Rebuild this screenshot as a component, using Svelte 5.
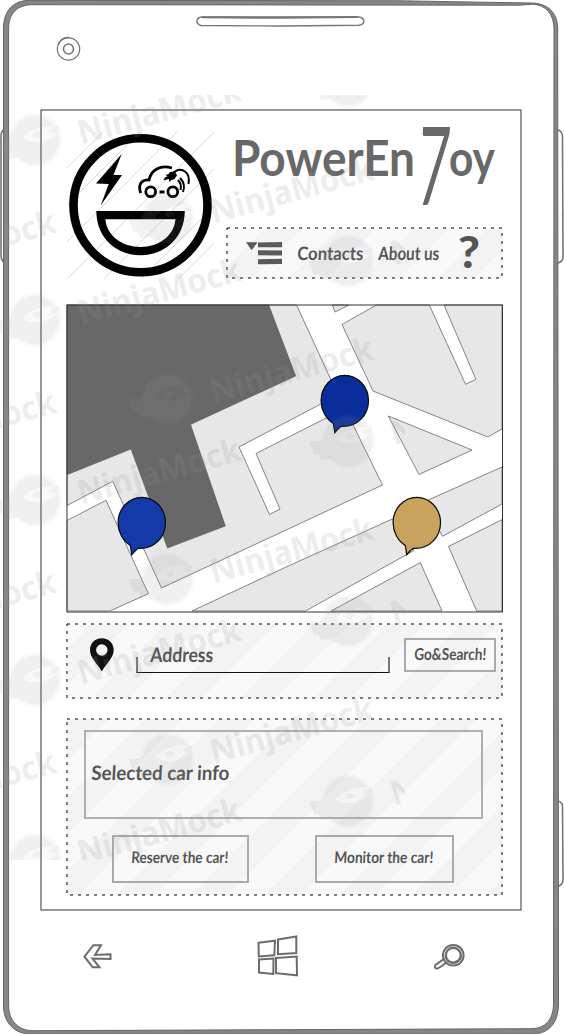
<script>
  const heads = [
    [35, 140], [35, 320], [35, 500], [35, 680], [35, 860],
    [167.5, 219], [167.5, 399], [167.5, 579], [167.5, 759],
    [348, 81], [348, 261], [348, 441], [348, 621], [348, 801]
  ];
  const marks = [...heads, [-150, 272], [-150, 452], [-150, 632], [-150, 812]];
  const blocks = [
    '67,305 296.5,305 338,395 239,447 269.5,514.5 280,509 256,453.5 326.3,418 345,408.5 382.5,485 285,530.5 161.5,588 112.7,481.3 67,505.5',
    '67,520.5 106,500.3 148.3,593.7 110,611 67,611',
    '192,611 285,567.5 399,516 414,550.5 305.5,611',
    '425,501.5 502,467 502,504 442.5,536.3',
    '331,611 420.3,562.7 442,611',
    '448.5,546.5 502,519.7 502,611 476.7,611',
    '388.3,416 472,450 419,474.5',
    '342,324.5 376.5,305 429.3,305 465.5,384.3 476,379.5 444,305 502,305 502,429 487.7,437 373,391',
    '332.3,305 335,312 349,305'
  ];
  const pins = [
    { x: 344.8, y: 400.7, fill: '#092d9b' },
    { x: 416.8, y: 522.7, fill: '#c9a25d' },
    { x: 141.8, y: 522.7, fill: '#143aa9' }
  ];
  const hatch = [36, 73, 110, 147, 184, 221, 258];
</script>

{#snippet hand(text, w, size)}
  <svg class="hand" width={w} height="24" aria-label={text}>
    <text x="0" y="18" font-size={size} textLength={w} lengthAdjust="spacingAndGlyphs">{text}</text>
  </svg>
{/snippet}

{#snippet dashes()}
  <svg class="dashes"><rect width="100%" height="100%" /></svg>
{/snippet}

<div class="phone">
  <svg class="frame" width="564" height="1034" viewBox="0 0 564 1034">
    <g fill="none" stroke="#777" stroke-width="1.6">
      <path d="M4 130Q1 131 1 136V256Q1 260 4 262" />
      <path d="M558 130Q562 131 562.500 136L563 258Q562 262 558 263" />
      <path d="M558 801Q562 802 562.500 806L563 881Q562 885 558 886.500" />
    </g>
    <path
      fill="#868686" stroke="#666" stroke-width="1" fill-rule="evenodd"
      d="M30 .3L400 .8 531 3C548 3 557.500 13 557.700 28L558.500 1005C558 1024 548 1034 532 1034H31C14 1034 3.500 1022 3.500 1006V27C4 10 14 .3 30 .3ZM31 4.700L520 5.200 533 4.200C546 5 553.500 14 554 28L553.500 1005C553 1020 545 1028.500 532 1028.700L31 1030.700C17 1030 8.600 1019 8.600 1006V27C9 13 18 5 31 4.700Z"
    />
    <g fill="none" stroke="#777" stroke-width="1.400">
      <path d="M201 17H359Q364 18 364 21.500Q363 25 359 25.200L280 26 201 25.500Q197 24 197 21.500Q197 18 201 17Z" />
      <path stroke-width="2" d="M202 17.300L280 17.800 358 17" />
      <circle cx="68.500" cy="49" r="11.200" stroke-width="1.200" />
      <circle cx="68.500" cy="49" r="5" stroke-width="1.600" />
      <path d="M58 45Q61 37 69 37.500" />
    </g>
  </svg>

  <main class="screen">
    <svg class="outline"><rect width="100%" height="100%" /></svg>
    <header>
      <svg class="logo" width="148" height="148" viewBox="67 132 148 148">
        <g stroke="#ccc" stroke-width=".7">
          {#each hatch as h}
            <line x1={67 + Math.max(0, h - 147)} y1={132 + Math.min(147, h)} x2={67 + Math.min(147, h)} y2={132 + Math.max(0, h - 147)} />
          {/each}
        </g>
        <circle cx="140.500" cy="205.300" r="67" fill="none" stroke="#000" stroke-width="8.600" />
        <path d="M121.700 154L96 183.500 108.700 184 100.700 205.500 122 175 113.500 175Z" />
        <path fill-rule="evenodd" d="M96.300 211H184.800C184.500 239 164 255.200 140.500 255.200S96.600 239 96.300 211ZM105.300 219.300C107 236 122 247 140.500 247S174 236 175.500 219.300Z" />
        <g fill="none" stroke="#000" stroke-width="2.800">
          <circle cx="150.700" cy="191.800" r="4.900" />
          <circle cx="172.800" cy="191.800" r="4.900" />
          <path d="M159.500 192H164.500M140.700 193C137.500 184 142 179.500 149 180C151 170 160 164.500 172 168" />
          <path d="M172 174Q179 167 185 171.500Q190 175 188.500 184M178 180Q182 184 180.500 190M180 178Q186 184 183 192" stroke-width="2" />
        </g>
        <path d="M163 180.500L165.500 177 167.500 176.500 165.500 174.500 168 174.500 170 172 175 171.500 177 175.500 174.500 179 171.500 180 169 182 169 179 166.500 179.500Z" />
      </svg>
      <div class="heading">
        <svg class="title" width="270" height="100" viewBox="228 118 270 100">
          <text x="232" y="175.500" font-size="50" textLength="183" lengthAdjust="spacingAndGlyphs">PowerEn</text>
          <text transform="translate(423 205) skewX(-3)" class="seven" font-size="109" textLength="32" lengthAdjust="spacingAndGlyphs" x="-7">7</text>
          <text x="449" y="175.500" font-size="50" textLength="46" lengthAdjust="spacingAndGlyphs">oy</text>
        </svg>
        <nav class="panel menu" style:--phase="1.4px">
          {@render dashes()}
          <svg class="burger" width="37" height="23" viewBox="246 241 37 23" fill="#5a5a5a">
            <path d="M246 241.200H257.500L251.700 249.300ZM258 241.500L282 241V246.300H258ZM258 249.200L282 249.500V254.500L258 254.300ZM258 258.200L282 257.700V263L258 263.200Z" />
          </svg>
          {@render hand('Contacts', 66, 18.5)}
          {@render hand('About us', 61, 18.5)}
          <svg class="help" width="24" height="36"><text x="0" y="33" font-size="43" textLength="22" lengthAdjust="spacingAndGlyphs">?</text></svg>
        </nav>
      </div>
    </header>

    <svg class="map" width="437" height="308" viewBox="66 304 437 308">
      <rect x="67" y="305" width="435.500" height="307" fill="#fff" />
      <g fill="#e7e7e7" stroke="#777" stroke-width=".9">
        {#each blocks as points}<polygon {points} />{/each}
      </g>
      <polygon fill="#686868" stroke="#555" stroke-width=".6" points="67,305 268.700,305 295.700,376 190.500,424.500 225.300,526 167.500,548 131,449 67,474.700" />
      <rect x="67" y="305" width="435.500" height="307" fill="none" stroke="#333" />
      {#each pins as p}
        <path
          transform="translate({p.x} {p.y})" fill={p.fill} stroke="#080808" stroke-width="1.200"
          d="M-11.500 22.700C-19 18-23.700 9-23.700 0C-23.700-14-13-25.400 0-25.400S23.700-14 23.700 0S13 26.500-3.500 25.600Q-7 28-10 32Z"
        />
      {/each}
    </svg>

    <section class="panel search" style:--phase="-8.5px">
      {@render dashes()}
      <svg class="marker" width="24" height="34" viewBox="90 637.500 24 34">
        <path fill="#111" fill-rule="evenodd" d="M101.800 637.700C94.500 637.700 90 643 90 649.500C90 657 97 663 101.800 671C106.500 663 113.700 657 113.700 649.500C113.700 643 109 637.700 101.800 637.700ZM101.800 643.800A5.700 5.700 0 1 1 101.800 655.200A5.700 5.700 0 1 1 101.800 643.800Z" />
      </svg>
      <div class="field">{@render hand('Address', 63, 20)}</div>
      <div class="btn go">{@render hand('Go&Search!', 72, 16.5)}</div>
    </section>

    <section class="panel car" style:--phase="29px">
      {@render dashes()}
      <div class="info">{@render hand('Selected car info', 138, 20)}</div>
      <div class="actions">
        <div class="btn reserve">{@render hand('Reserve the car!', 97, 16)}</div>
        <div class="btn monitor">{@render hand('Monitor the car!', 99, 16)}</div>
      </div>
    </section>
  </main>

  <footer>
    <svg width="30" height="26" viewBox="83 943 30 26" fill="none" stroke="#6c6c6c" stroke-width="2">
      <path d="M84.500 956.700L93.300 945.200H101L95 955L110.500 954.300V959L92.500 958.500L99.500 967.300H92.700Z" />
    </svg>
    <svg class="home" width="42" height="42" viewBox="257 934 42 42" fill="none" stroke="#6c6c6c" stroke-width="2">
      <path d="M258.500 941.800L275 939.700 274.300 954.300 258.800 955.500ZM278 938.500L296.300 935.500V952L278 953.300ZM259 958.500L273.500 957.500 273.300 973 259 971.500ZM276 957L296.700 955.500 297 974.300 276 972.200Z" />
    </svg>
    <svg width="34" height="28" viewBox="433 943 34 28" fill="none" stroke="#6c6c6c">
      <circle cx="453.300" cy="956.300" r="10.300" stroke-width="2" />
      <circle cx="453.300" cy="956.300" r="7.500" stroke-width="2.400" />
      <path d="M444.500 959.500L435.500 966Q434 968.500 436.500 969.700Q438 970 447 963M461 957Q460 962 455 963" stroke-width="2" />
    </svg>
  </footer>

  <svg class="watermark" width="405" height="765" viewBox="0 95 405 765" aria-hidden="true">
    {#each heads as [x, y]}
      <g transform="translate({x} {y})">
        <circle r="27" opacity=".3" />
        <path fill-rule="evenodd" opacity=".75" d="M-24-4A24.300 24.300 0 1 1-17 17.500L-27 19-29 13-34 14-39 0-27 0ZM-13-2C-5-11 12-16 24-13C25-6 14 2 1 2Q-8 2-13-2Z" />
        <ellipse cx="2" cy="-5" rx="4.200" ry="3" opacity=".75" /><ellipse cx="19" cy="-9.500" rx="3.400" ry="2.600" opacity=".75" />
      </g>
    {/each}
    {#each marks as [x, y]}
      <text transform="translate({x + 46} {y + 4.5}) rotate(-15.300)" font-size="33" textLength="168" lengthAdjust="spacingAndGlyphs">NinjaMock</text>
    {/each}
  </svg>
</div>

<style>
  :global(body) { background: #fff; }
  .phone {
    position: relative;
    box-sizing: border-box;
    width: 564px;
    height: 1034px;
    padding: 110px 43px 0 41px;
    overflow: hidden;
    font-family: Lato, "Open Sans", sans-serif;
    color: #555;
  }
  svg { display: block; flex: none; overflow: visible; }
  .frame { position: absolute; inset: 0; }
  .screen {
    position: relative;
    box-sizing: border-box;
    display: flex;
    flex-direction: column;
    width: 480px;
    height: 800px;
    padding: 8px 18px 0 26px;
  }
  .outline, .dashes {
    position: absolute;
    inset: 0;
    width: 100%;
    height: 100%;
    fill: none;
  }
  .outline rect { stroke: #333; }
  .dashes rect { stroke: #000; stroke-dasharray: 3 5; }
  header { display: flex; height: 186px; }
  .logo { margin-top: 14px; }
  .heading { display: flex; flex-direction: column; margin-left: 12px; }
  .title { margin-left: 1px; fill: #686868; font-weight: 700; }
  .seven { font-weight: 400; }
  .hand { fill: currentColor; font-weight: 700; }
  .hand text { transform: skewX(-3deg); transform-origin: 0 18px; }
  .panel {
    position: relative;
    box-sizing: border-box;
    background: repeating-linear-gradient(
      135deg,
      #f9f9f9 var(--phase) calc(var(--phase) + 26.160px),
      #f3f3f3 calc(var(--phase) + 26.160px) calc(var(--phase) + 52.320px)
    );
  }
  .menu {
    display: flex;
    align-items: center;
    width: 275px;
    height: 50px;
    margin-top: 10px;
    padding-left: 19px;
  }
  .menu .hand { margin: 1px 0 0 15px; }
  .burger { margin-right: -1px; }
  .help { margin-left: 19px; fill: #555; font-weight: 900; }
  .map { margin-left: -1px; }
  .search {
    display: flex;
    width: 435px;
    height: 74px;
    margin-top: 12px;
    padding: 14px 0 0 23px;
  }
  .field {
    box-sizing: border-box;
    width: 254px;
    height: 16px;
    margin: 19px 0 0 22px;
    padding-left: 12px;
    border: solid #777;
    border-width: 0 2px 1px;
    border-bottom-color: #111;
  }
  .field .hand { margin-top: -13px; }
  .btn {
    display: flex;
    box-sizing: border-box;
    align-items: center;
    justify-content: center;
    border: 2px solid #aaa;
  }
  .go { width: 92px; height: 34px; margin-left: 14px; }
  .go .hand { margin-top: -2px; }
  .car {
    width: 435px;
    height: 176px;
    margin-top: 21px;
    padding: 11px 0 0 17px;
  }
  .info {
    display: flex;
    box-sizing: border-box;
    align-items: center;
    width: 399px;
    height: 89px;
    padding-left: 5px;
    border: 2px solid #b0b0b0;
  }
  .info .hand { margin-top: -1px; }
  .actions { display: flex; gap: 66px; margin: 16px 0 0 28px; }
  .reserve { width: 137px; height: 48px; }
  .monitor { width: 139px; height: 48px; }
  .actions .hand { margin: -4px 2px 0 0; }
  footer {
    display: flex;
    align-items: center;
    justify-content: space-between;
    height: 92px;
    margin-right: 13px;
    padding: 0 41px 0 42px;
  }
  .home { position: relative; left: 5px; }
  .watermark {
    position: absolute;
    left: 0;
    top: 95px;
    overflow: hidden;
    fill: #959595;
    opacity: .16;
    pointer-events: none;
    font-family: "Open Sans", sans-serif;
    font-weight: 700;
  }
</style>
